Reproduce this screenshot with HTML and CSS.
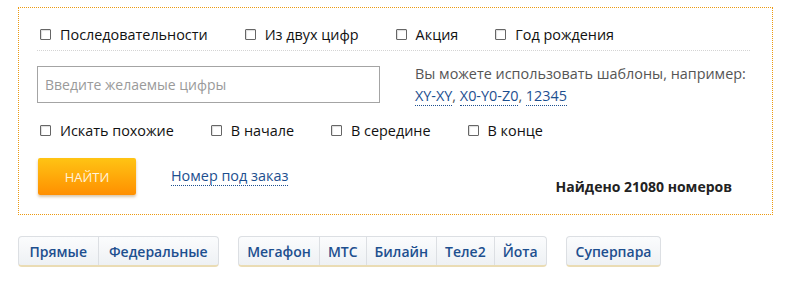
FILE: index.html
```html
<!DOCTYPE html>
<html lang="ru">
<head>
    <meta charset="UTF-8">
    <title>Подбор номера</title>
    <link rel="stylesheet" href="styles.css">
</head>
<body>

    <div class="search-box">
        <div class="check-row top-row">
            <label class="check"><span class="box"></span>Последовательности</label>
            <label class="check"><span class="box"></span>Из двух цифр</label>
            <label class="check"><span class="box"></span>Акция</label>
            <label class="check"><span class="box"></span>Год рождения</label>
        </div>

        <div class="input-row">
            <input type="text" class="digits" placeholder="Введите желаемые цифры">
            <div class="hint">
                Вы можете использовать шаблоны, например:<br>
                <a href="#" class="dotted">XY-XY</a>, <a href="#" class="dotted">X0-Y0-Z0</a>, <a href="#" class="dotted">12345</a>
            </div>
        </div>

        <div class="check-row">
            <label class="check"><span class="box"></span>Искать похожие</label>
            <label class="check"><span class="box"></span>В начале</label>
            <label class="check"><span class="box"></span>В середине</label>
            <label class="check"><span class="box"></span>В конце</label>
        </div>

        <div class="action-row">
            <button type="button" class="find-btn">Найти</button>
            <a href="#" class="dotted order-link">Номер под заказ</a>
            <span class="found">Найдено 21080 номеров</span>
        </div>
    </div>

    <div class="tabs">
        <div class="tab-group types">
            <a href="#" class="tab">Прямые</a>
            <a href="#" class="tab">Федеральные</a>
        </div>
        <div class="tab-group operators">
            <a href="#" class="tab">Мегафон</a>
            <a href="#" class="tab">МТС</a>
            <a href="#" class="tab">Билайн</a>
            <a href="#" class="tab">Теле2</a>
            <a href="#" class="tab">Йота</a>
        </div>
        <div class="tab-group">
            <a href="#" class="tab">Суперпара</a>
        </div>
    </div>

</body>
</html>
```

FILE: styles.css
```css
body {
    margin: 0;
    padding: 7px 0 0 18px;
    background: #fff;
    font-family: 'Open Sans', 'Noto Sans', sans-serif;
    font-size: 14.4px;
    color: #111;
}

.search-box {
    width: 753px;
    height: 206px;
    border: 1px dotted #ec9a12;
}

/* чекбоксы */
.check-row {
    display: flex;
    gap: 37px;
    padding-left: 21px;
    height: 20px;
    align-items: center;
}

.top-row {
    margin: 16px 22px 0 18px;
    padding-left: 3px;
    padding-bottom: 6px;
    border-bottom: 1px dotted #d4d4d4;
}

.check {
    display: flex;
    align-items: center;
    cursor: pointer;
    white-space: nowrap;
}

.box {
    width: 9px;
    height: 9px;
    border: 1px solid #666;
    border-radius: 1px;
    margin-right: 9px;
    background: #fff;
    box-shadow: inset 1px 1px 1px #ddd;
}

/* поле ввода */
.input-row {
    display: flex;
    margin: 15px 0 0 18px;
    height: 54px;
}

.digits {
    width: 343px;
    height: 37px;
    box-sizing: border-box;
    border: 1px solid #a4a4a4;
    padding: 0 7px;
    font-family: inherit;
    font-size: 14px;
    color: #333;
    outline: none;
}

.digits::placeholder {
    color: #9a9a9a;
}

.hint {
    margin-left: 35px;
    margin-top: -3px;
    line-height: 22px;
    color: #555;
}

a.dotted {
    color: #1d4f8f;
    text-decoration: none;
    border-bottom: 1px dotted #1d4f8f;
}

/* кнопка и итог */
.action-row {
    display: flex;
    align-items: center;
    margin: 18px 0 0 19px;
    height: 37px;
}

.find-btn {
    width: 98px;
    height: 37px;
    border: none;
    border-radius: 2px;
    background: linear-gradient(#ffc414, #ff8f00);
    box-shadow: 0 2px 3px rgba(150, 90, 0, 0.35);
    color: #fff3dc;
    font-family: inherit;
    font-size: 13px;
    text-transform: uppercase;
    cursor: pointer;
}

.order-link {
    margin-left: 35px;
    line-height: 18px;
}

.found {
    margin-left: auto;
    margin-right: 40px;
    margin-top: 19px;
    font-weight: bold;
    font-size: 14px;
    color: #222;
}

/* табы операторов */
.tabs {
    display: flex;
    gap: 19px;
    margin-top: 21px;
}

.tab-group {
    display: flex;
    border: 1px solid #dcdfe3;
    border-bottom: 2px solid #eadcb4;
    border-radius: 4px;
    background: linear-gradient(#fbfcfd, #eef1f4);
    height: 28px;
}

.tab {
    display: flex;
    align-items: center;
    padding: 0 9px;
    color: #1d4f8f;
    font-size: 14px;
    font-weight: 600;
    text-decoration: none;
    border-left: 1px solid #dcdfe3;
}

.tab:first-child {
    border-left: none;
}

.types .tab {
    padding: 0 10.5px;
}

.operators .tab {
    padding: 0 8px;
}
```
